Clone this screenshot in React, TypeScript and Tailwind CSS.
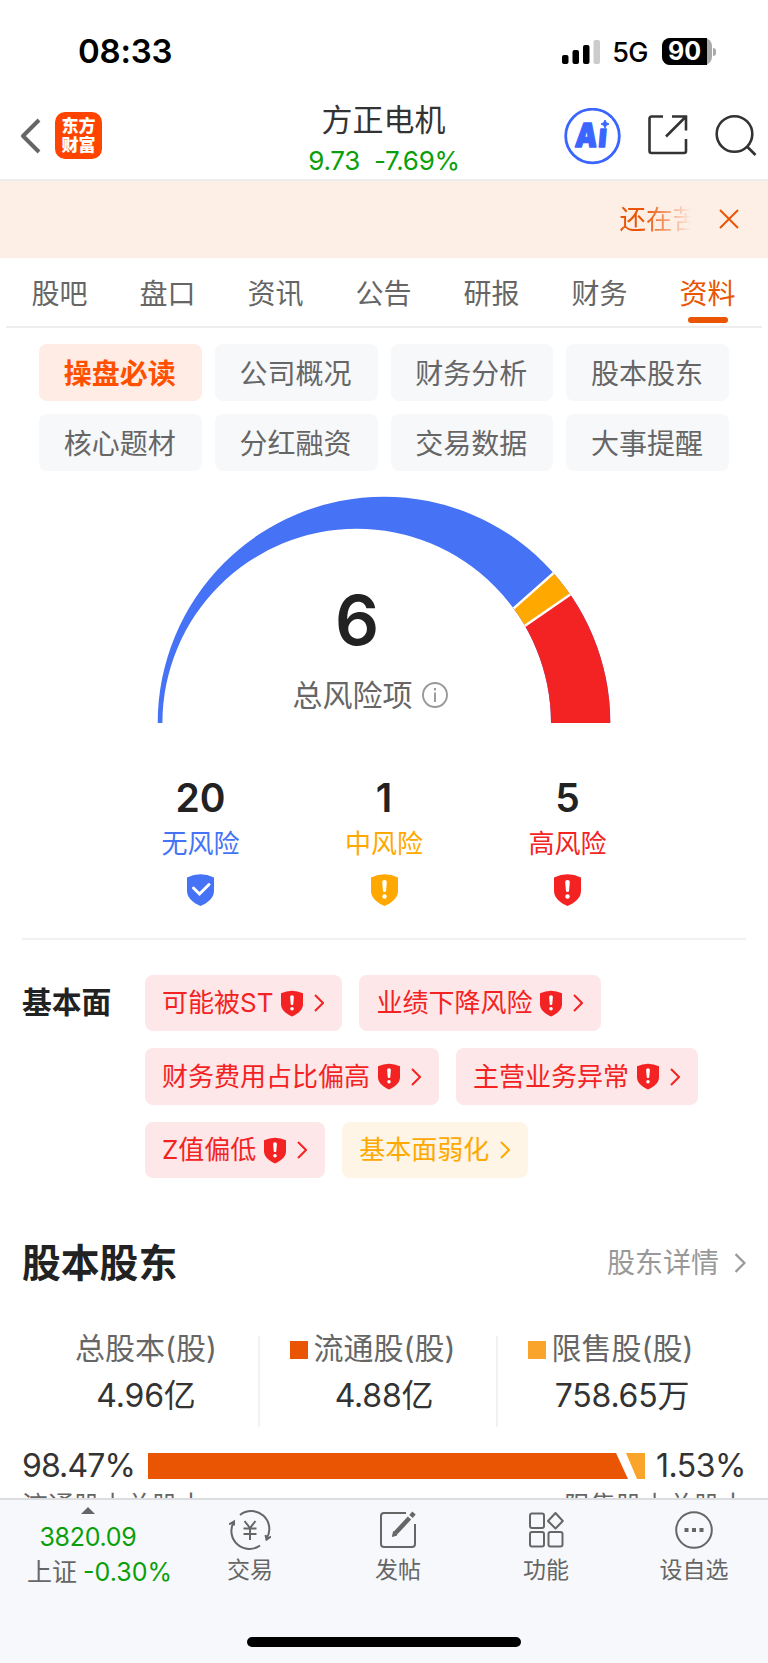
import { clsx } from "clsx";
import type { ReactNode } from "react";

const TABS = ["股吧", "盘口", "资讯", "公告", "研报", "财务", "资料"];

const SECTIONS = [
  "操盘必读",
  "公司概况",
  "财务分析",
  "股本股东",
  "核心题材",
  "分红融资",
  "交易数据",
  "大事提醒",
];

export default function App() {
  return (
    <div className="flex h-[1663px] w-[768px] flex-col overflow-hidden bg-white font-['Inter','Noto_Sans_CJK_SC',sans-serif] text-[#333]">
      <StatusBar />
      <Header />
      <Notice />
      <Tabs />
      <main className="min-h-0 flex-1 overflow-hidden">
        <SectionGrid />
        <RiskGauge />
        <RiskCounts />
        <Fundamentals />
        <Shareholders />
      </main>
      <BottomBar />
    </div>
  );
}

function StatusBar() {
  return (
    <div className="flex h-[103px] shrink-0 items-center justify-between pl-[78px] pr-[52px] text-black">
      <span className="text-[33px] font-semibold leading-none tracking-[-0.2px]">08:33</span>
      <div className="flex items-center">
        <svg className="h-6 w-[39px]" viewBox="0 0 39 24">
          <rect x="0" y="15" width="6.5" height="9" rx="2" />
          <rect x="10.5" y="10" width="6.5" height="14" rx="2" />
          <rect x="21" y="5" width="6.5" height="19" rx="2" />
          <rect x="31.5" y="0" width="6.5" height="24" rx="2" fill="#ccc" />
        </svg>
        <span className="ml-[11px] pt-[2px] text-[27px] font-medium leading-[34px] tracking-[-0.5px]">5G</span>
        <div className="ml-[14px] flex h-[27px] w-[50px] rounded-[8px] bg-[#aaa]">
          <div className="flex w-[45px] items-center justify-center rounded-l-[8px] bg-black text-[25px] font-bold leading-[27px] text-white">
            90
          </div>
        </div>
        <div className="ml-px h-2 w-[3px] rounded-r-full bg-[#aaa]" />
      </div>
    </div>
  );
}

function Header() {
  return (
    <header className="flex h-[78px] shrink-0 justify-between border-b-2 border-[#ebecee]">
      <div className="flex w-[260px] pl-5 pt-[9px]">
        <svg className="mt-[6px] h-[36px] w-[22px]" viewBox="0 0 22 36" fill="none" stroke="#666" strokeWidth="4">
          <path d="M19 2 3 18l16 16" strokeLinejoin="round" />
        </svg>
        <div className="ml-[13px] flex h-[47px] w-[47px] flex-col items-center justify-center rounded-[10px] bg-[#ff4400] text-[17px] font-black leading-[19px] text-white">
          <span>东方</span>
          <span>财富</span>
        </div>
      </div>

      <div className="flex flex-col items-center">
        <h1 className="mr-px text-[31px] font-normal leading-[34px]">方正电机</h1>
        <p className="mt-[8px] whitespace-pre text-[26px] leading-[32px] tracking-[-0.3px] text-[#0a9f0a]">9.73  -7.69%</p>
      </div>

      <div className="flex w-[260px] justify-end pr-[10px] pt-[5px]">
        <svg className="h-[57px] w-[57px]" viewBox="0 0 57 57">
          <circle cx="28.500" cy="28" r="26.800" fill="none" stroke="#3a66ff" strokeWidth="2.800" />
          <text
            fontSize="33"
            fontWeight="900"
            letterSpacing="1.500"
            fill="#3a66ff"
            stroke="#3a66ff"
            strokeWidth="1.500"
            strokeLinejoin="round"
            transform="translate(10.500 39) skewX(-5) scale(.84 1)"
          >
            Ai
          </text>
          {/* the four-pointed star stands in for the dot of the i */}
          <rect x="33.500" y="10.500" width="14" height="9.500" fill="#fff" />
          <path d="m41 12 1.300 2.700L45 16l-2.700 1.300L41 20l-1.300-2.700L37 16l2.700-1.300z" fill="#3a66ff" stroke="#3a66ff" />
        </svg>
        <svg className="ml-[25px] mt-[5px] h-[44px] w-[44px]" viewBox="0 0 44 44" fill="none" stroke="#333" strokeWidth="2.600">
          <path d="M17 3.500H5.500a2 2 0 0 0-2 2V38a2 2 0 0 0 2 2H38a2 2 0 0 0 2-2V26" />
          <path d="M26 3.500h14v14M39.500 4 20 23.500" />
        </svg>
        <svg className="ml-[24px] mt-[6px] h-[44px] w-[44px]" viewBox="0 0 44 44" fill="none" stroke="#333" strokeWidth="2.600">
          <circle cx="20.500" cy="20" r="17.800" />
          <path d="M33 32.500 41.500 41" />
        </svg>
      </div>
    </header>
  );
}

function Notice() {
  return (
    <div className="flex h-[77px] shrink-0 items-center justify-end bg-[#fdeee6] pb-[2px] pr-[28px] text-[#ea5504]">
      <span className="whitespace-nowrap bg-gradient-to-r from-[#ea5504] from-30% to-transparent to-90% bg-clip-text text-[26.500px] leading-[40px] text-transparent">
        还在苦
      </span>
      <svg className="ml-[19px] h-[22px] w-[22px]" viewBox="0 0 22 22" fill="none" stroke="currentColor" strokeWidth="2">
        <path d="m2 2 18 18M20 2 2 20" />
      </svg>
    </div>
  );
}

function Tabs() {
  return (
    <nav className="mx-[6px] flex h-[70px] shrink-0 border-b-2 border-[#eeeeef]">
      {TABS.map((tab) => {
        const active = tab === "资料";
        return (
          <div
            key={tab}
            className={clsx(
              "relative flex flex-1 justify-center pr-px pt-[16px] text-[28px] leading-[40px]",
              active ? "text-[#ea5504]" : "text-[#666]",
            )}
          >
            {tab}
            {active && <span className="absolute bottom-[3px] left-[calc(50%-20px)] h-[6px] w-10 rounded-full bg-[#ea5504]" />}
          </div>
        );
      })}
    </nav>
  );
}

function SectionGrid() {
  return (
    <div className="grid grid-cols-4 gap-x-[13px] gap-y-[13px] px-[39px] pt-4">
      {SECTIONS.map((name, i) => (
        <div
          key={name}
          className={clsx(
            "flex h-[57px] items-center justify-center rounded-lg pr-px pt-[2px] text-[28px] leading-none",
            i === 0 ? "bg-[#ffece5] font-bold text-[#ff5000]" : "bg-[#f7f8fa] text-[#666]",
          )}
        >
          {name}
        </div>
      ))}
    </div>
  );
}

function RiskGauge() {
  return (
    <div className="relative mx-auto mt-[25px] h-[227px] w-[454px]">
      {/* outer arc is centred at 227, the inner one at 200, so the band widens to the right */}
      <svg className="h-full w-full" viewBox="0 0 454 227">
        <clipPath id="band">
          <path d="M.7 227a226.300 226.300 0 0 1 452.600 0H394a194.300 194.300 0 0 0-388.600 0z" />
        </clipPath>
        <g clipPath="url(#band)">
          <rect width="454" height="227" fill="#4673f6" />
          <path d="M227 227 451.600 28.300 520 24.800z" fill="#ffa900" />
          <path d="M227 227 451.700 72 454 227z" fill="#f42323" />
          <path d="M227 227 451.600 28.300M227 227 451.700 72" stroke="#fff" strokeWidth="2.500" />
        </g>
      </svg>
      <div className="absolute inset-x-0 top-[94px] flex flex-col items-center">
        <span className="mr-[54px] text-[69px] font-semibold leading-[60px] text-[#222]">6</span>
        <div className="mr-[28px] mt-[21px] flex items-center text-[30px] leading-[48px] text-[#666]">
          总风险项
          <svg className="ml-[9px] h-[26px] w-[26px]" viewBox="0 0 26 26" fill="none" stroke="#999" strokeWidth="1.900">
            <circle cx="13" cy="13" r="12" />
            <path d="M13 10.500V20M13 6v2.500" />
          </svg>
        </div>
      </div>
    </div>
  );
}

function RiskCounts() {
  return (
    <div className="mx-[22px] flex h-[217px] justify-center border-b-2 border-[#f2f2f3] pt-[50px]">
      <RiskCount count={20} label="无风险" color="text-[#4673f6]" safe />
      <RiskCount count={1} label="中风险" color="text-[#ffa900]" />
      <RiskCount count={5} label="高风险" color="text-[#f42323]" />
    </div>
  );
}

function RiskCount({ count, label, color, safe }: { count: number; label: string; color: string; safe?: boolean }) {
  return (
    <div className="flex w-[183.500px] flex-col items-center">
      <span className="text-[39px] font-semibold leading-[50px] text-[#222]">{count}</span>
      <span className={clsx("mt-[3px] text-[26px] leading-[36px]", color)}>{label}</span>
      <Shield className={clsx("mt-[12px] h-8 w-[27px]", color)} safe={safe} />
    </div>
  );
}

function Shield({ className, safe }: { className?: string; safe?: boolean }) {
  return (
    <svg className={className} viewBox="0 0 27 32" fill="none">
      <path d="M0 3.500Q13.500-3 27 3.500V17c0 7-6.500 12-13.500 15C6.500 29 0 24 0 17z" fill="currentColor" />
      {safe ? (
        <path d="m6.500 14 6 6L22 10.500" stroke="#fff" strokeWidth="3" strokeLinecap="round" />
      ) : (
        <>
          <path d="M11.200 8q0-2 2.300-2t2.300 2l-.8 9.200q-1.500 1.400-3 0z" fill="#fff" />
          <circle cx="13.500" cy="22.500" r="2.200" fill="#fff" />
        </>
      )}
    </svg>
  );
}

function Chevron({ className }: { className?: string }) {
  return (
    <svg className={className} viewBox="0 0 10 18" fill="none" stroke="currentColor" strokeWidth="2">
      <path d="m1 1 8 8-8 8" />
    </svg>
  );
}

function Fundamentals() {
  return (
    <section className="flex pl-[22px] pt-[34.500px]">
      <h3 className="w-[123px] shrink-0 text-[29.800px] font-bold leading-[54px] text-[#222]">基本面</h3>
      <div className="flex flex-wrap gap-x-[17.500px] gap-y-[17px]">
        <RiskChip text="可能被ST" />
        <RiskChip text="业绩下降风险" />
        <RiskChip text="财务费用占比偏高" />
        <RiskChip text="主营业务异常" />
        <RiskChip text="Z值偏低" />
        <RiskChip text="基本面弱化" minor />
      </div>
    </section>
  );
}

function RiskChip({ text, minor }: { text: string; minor?: boolean }) {
  return (
    <div
      className={clsx(
        "flex h-[56.600px] items-center rounded-lg pl-[17px] pt-px text-[26px] leading-none",
        minor ? "bg-[#fef5e7] pr-[18px] text-[#ffa900]" : "bg-[#fde7e8] pr-[17.500px] text-[#f42323]",
      )}
    >
      {text}
      {!minor && <Shield className="ml-2 h-[27px] w-[22px]" />}
      <Chevron className="ml-[11px] h-[18px] w-[10px]" />
    </div>
  );
}

function Shareholders() {
  return (
    <section className="px-[22px] pt-[52px]">
      <div className="flex h-[66px] items-center justify-between">
        <h2 className="text-[38.800px] font-bold leading-none text-[#222]">股本股东</h2>
        <div className="flex items-center text-[28px] leading-none text-[#999]">
          股东详情
          <Chevron className="ml-[15px] h-5 w-3" />
        </div>
      </div>

      <div className="mt-[39.500px] flex h-[91px]">
        <ShareStat label="总股本(股)" value="4.96亿" />
        <ShareStat label="流通股(股)" value="4.88亿" marker="bg-[#ea5504]" />
        <ShareStat label="限售股(股)" value="758.65万" marker="bg-[#faa42b]" last />
      </div>

      <div className="mt-[23px] flex h-[32px] items-center text-[32px] leading-none">
        <span className="w-[126px] tracking-[-0.9px]">98.47%</span>
        <svg className="h-[26px] w-[497px]" viewBox="0 0 497 26">
          <path d="M0 0h468l12 26H0z" fill="#ea5504" />
          <path d="M478 0h19v26h-8z" fill="#faa42b" />
        </svg>
        <span className="flex-1 text-right tracking-[-0.5px]">1.53%</span>
      </div>
      <div className="mt-[4px] flex justify-between text-[26px] leading-[40px] text-[#666]">
        <span>流通股占总股本</span>
        <span>限售股占总股本</span>
      </div>
    </section>
  );
}

function ShareStat({ label, value, marker, last }: { label: string; value: string; marker?: string; last?: boolean }) {
  return (
    <div
      className={clsx(
        "flex w-[238px] flex-col items-center border-[#f2f2f3]",
        last ? "pl-[10px]" : "border-r-2 pl-[12px]",
      )}
    >
      <div className={clsx("-mt-[2px] flex items-center whitespace-nowrap text-[30px] leading-[28px] text-[#666]", marker && "pr-[23px]")}>
        {marker && <i className={clsx("mr-[6px] mt-[5px] h-[18px] w-[18px]", marker)} />}
        {label}
      </div>
      <div className="mt-[14px] whitespace-nowrap text-[32px] leading-[40px] tracking-[-0.2px]">{value}</div>
    </div>
  );
}

function BottomBar() {
  return (
    <footer className="flex h-[165px] shrink-0 flex-col items-center border-t-2 border-[#dcdde0] bg-[#f7f8fb] text-[#666]">
      <div className="flex w-full flex-1">
        <div className="flex w-[176px] flex-col items-center pt-[7px]">
          <svg className="h-[7px] w-[14px]" viewBox="0 0 14 7" fill="#666">
            <path d="M7 0l7 7H0z" />
          </svg>
          <span className="mt-[8px] text-[25px] leading-[30px] tracking-[-0.3px] text-[#0a9f0a]">3820.09</span>
          <div className="mt-[4px] flex pl-[23px] text-[25px] leading-[32px]">
            上证
            <span className="ml-[6px] text-[#0a9f0a]">-0.30%</span>
          </div>
        </div>
        <NavItem label="交易">
          <path d="M11 5A18 18 0 0 1 37.600 28.500M36.500 25l1 4.500L42 26.500" />
          <path d="M31 35.500A18 18 0 0 1 4.500 12.500M0 14.500 5 11.500v4" />
          <path d="m15.500 11 5.500 7 5.500-7M21 18v12M14.500 18.500h13M14.500 24h13" />
        </NavItem>
        <NavItem label="发帖">
          <path d="M29 3H7a3 3 0 0 0-3 3v28a3 3 0 0 0 3 3h28a3 3 0 0 0 3-3V14" />
          <path d="m18.500 23 14-15" strokeWidth="4.500" />
          <path d="m34 6.500 3-3.500" strokeWidth="4.500" />
          <path d="m15.500 26.500 1-5 3.500 3.500z" fill="#666" strokeWidth="1" />
        </NavItem>
        <NavItem label="功能">
          <rect x="5" y="3.500" width="14" height="14.500" rx="2" />
          <rect x="5" y="22" width="14" height="14.500" rx="2" />
          <rect x="23.500" y="22" width="14" height="14.500" rx="2" />
          <path d="m30.500 3 7.300 8-7.300 7.500L23 11z" strokeLinejoin="round" />
        </NavItem>
        <NavItem label="设自选">
          <circle cx="21" cy="20" r="17.800" />
          <path d="M11.500 20h4M19 20h4M26.500 20h4" strokeWidth="4" />
        </NavItem>
      </div>
      <div className="mb-4 h-[10px] w-[274px] rounded-full bg-black" />
    </footer>
  );
}

function NavItem({ label, children }: { label: string; children: ReactNode }) {
  return (
    <div className="flex w-[148px] flex-col items-center pt-[10px]">
      <svg className="h-10 w-[42px]" viewBox="0 0 42 40" fill="none" stroke="#666" strokeWidth="2">
        {children}
      </svg>
      <span className="mt-[3px] text-[23px] leading-[34px]">{label}</span>
    </div>
  );
}
